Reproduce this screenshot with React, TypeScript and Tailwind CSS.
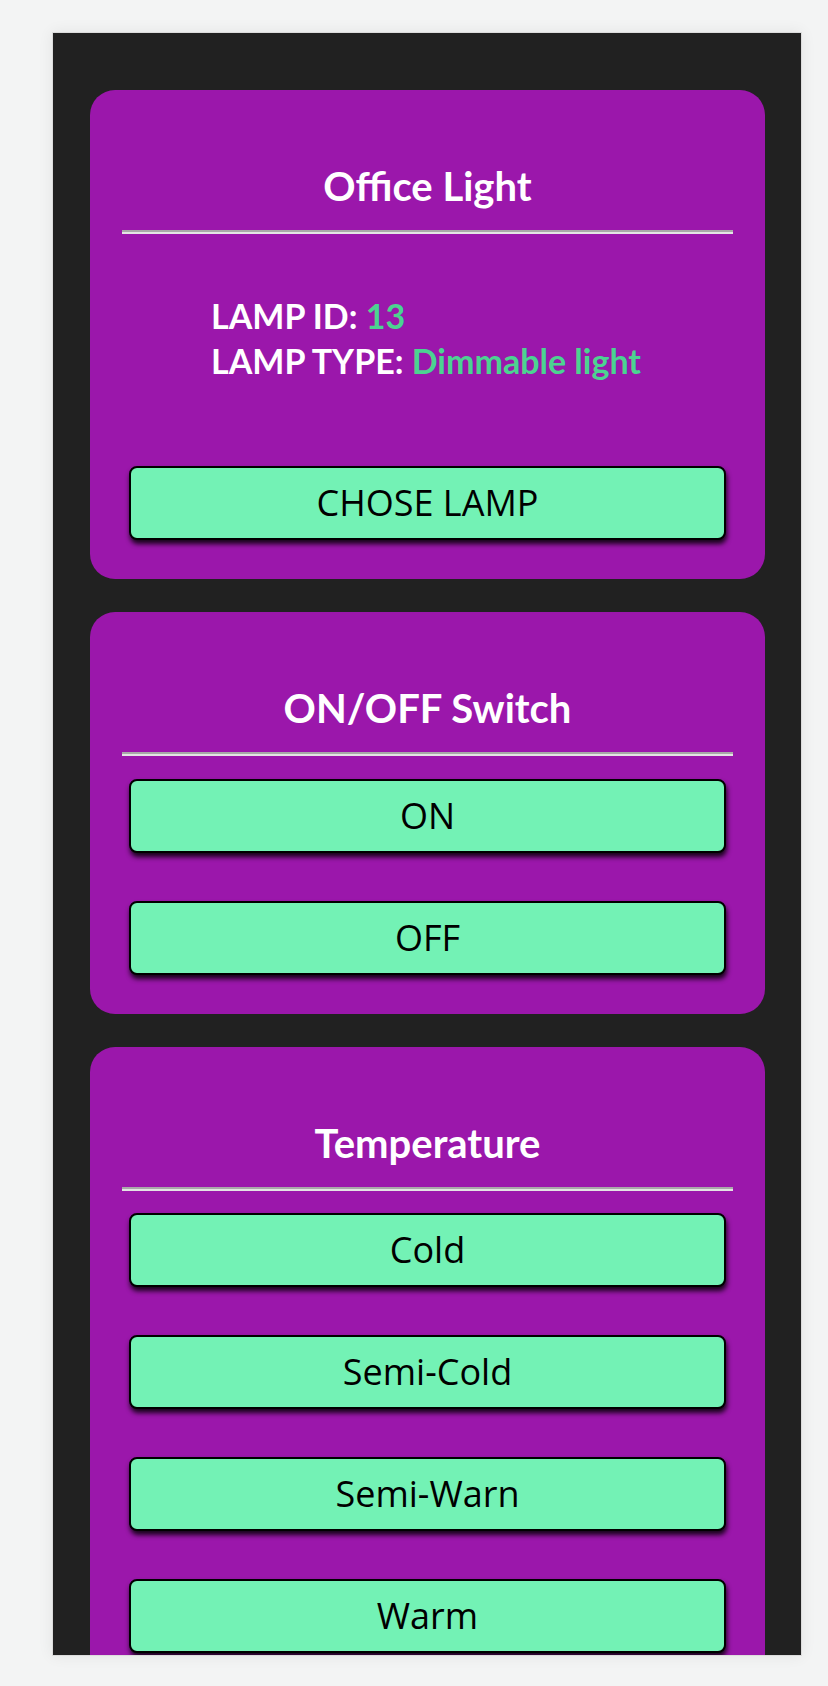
const temperatures = ["Cold", "Semi-Cold", "Semi-Warn", "Warm"];

function LampButton({ label }: { label: string }) {
  return (
    <button
      type="button"
      className="mx-[7px] flex h-[74px] items-center justify-center rounded-lg border-2 border-black bg-[#73f2b5] font-['Open_Sans',sans-serif] text-[36px] text-black shadow-[1px_4px_5px_rgba(0,0,0,0.85)]"
    >
      {label}
    </button>
  );
}

function Card({ title, children }: { title: string; children: React.ReactNode }) {
  return (
    <section className="ml-[37px] flex w-[675px] flex-col rounded-[25px] bg-[#9b17ab] px-8 pt-[72px] pb-[39px]">
      <h2 className="h-12 text-center font-['Lato',sans-serif] text-[40px] leading-[48px] font-bold text-white">
        {title}
      </h2>
      <hr className="mt-5 h-1 border-0 border-t-2 border-b-2 border-t-[#a9a9a9] border-b-[#e4e4e4]" />
      {children}
    </section>
  );
}

export default function App() {
  return (
    <div className="min-h-[1686px] bg-[#f3f4f4] pt-8 pl-[52px]">
      <div className="flex h-[1624px] w-[750px] flex-col gap-[33px] overflow-hidden border border-[#dcdcdc] bg-[#212121] pt-[57px] shadow-[0_0_14px_rgba(0,0,0,0.07)]">
        {/* Lamp info */}
        <Card title="Office Light">
          <div className="mt-[59px] pl-[89px] font-['Lato',sans-serif] text-[34px] leading-[45px] font-bold text-white">
            <p>
              LAMP ID: <span className="text-[#4cd391]">13</span>
            </p>
            <p>
              LAMP TYPE: <span className="text-[#4cd391]">Dimmable light</span>
            </p>
          </div>
          <div className="mt-[83px] flex flex-col">
            <LampButton label="CHOSE LAMP" />
          </div>
        </Card>

        {/* Power */}
        <Card title="ON/OFF Switch">
          <div className="mt-[23px] flex flex-col gap-12">
            <LampButton label="ON" />
            <LampButton label="OFF" />
          </div>
        </Card>

        {/* Colour temperature */}
        <Card title="Temperature">
          <div className="mt-[22px] flex flex-col gap-12">
            {temperatures.map((t) => (
              <LampButton key={t} label={t} />
            ))}
          </div>
        </Card>
      </div>
    </div>
  );
}
